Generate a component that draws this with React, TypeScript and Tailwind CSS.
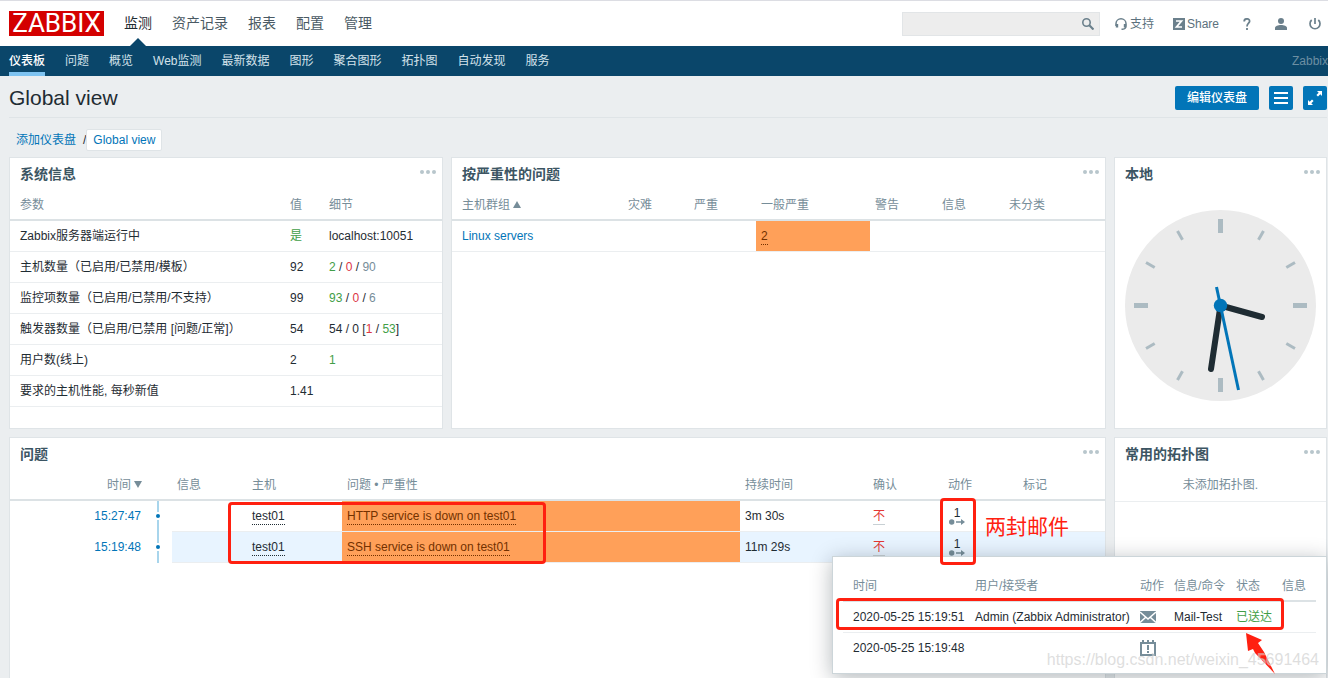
import type { ReactNode } from 'react';

const mainMenu = ['监测', '资产记录', '报表', '配置', '管理'];
const subMenu = ['仪表板', '问题', '概览', 'Web监测', '最新数据', '图形', '聚合图形', '拓扑图', '自动发现', '服务'];

const th = 'h-[31px] border-b-2 border-[#dce2e5] px-[5px] text-left font-normal text-[#768d99] first:pl-[10px]';
const td = 'h-[31px] border-b border-[#ebeef0] px-[5px] first:pl-[10px]';

function Green({ children }: { children: ReactNode }) {
  return <span className="text-[#429e47]">{children}</span>;
}

function Red({ children }: { children: ReactNode }) {
  return <span className="text-[#dc3545]">{children}</span>;
}

function Grey({ children }: { children: ReactNode }) {
  return <span className="text-[#768d99]">{children}</span>;
}

function Widget({ title, className = '', children }: { title: string; className?: string; children: ReactNode }) {
  return (
    <section className={`flex min-w-0 flex-col border border-[#dfe4e7] bg-white ${className}`}>
      <header className="flex h-8 shrink-0 justify-between pr-[5px] pl-[10px]">
        <h4 className="text-sm leading-8 font-bold text-[#3c5563]">{title}</h4>
        <button type="button" aria-label="更多" className="h-7 w-[18px]">
          <svg width="18" height="28" viewBox="0 0 18 28" fill="#b8c6cc">
            <circle cx="3" cy="14" r="2" />
            <circle cx="9" cy="14" r="2" />
            <circle cx="15" cy="14" r="2" />
          </svg>
        </button>
      </header>
      {children}
    </section>
  );
}

function SystemInfo() {
  const rows: [string, ReactNode, ReactNode][] = [
    ['Zabbix服务器端运行中', <Green>是</Green>, 'localhost:10051'],
    ['主机数量（已启用/已禁用/模板）', '92', <><Green>2</Green> / <Red>0</Red> / <Grey>90</Grey></>],
    ['监控项数量（已启用/已禁用/不支持）', '99', <><Green>93</Green> / <Red>0</Red> / <Grey>6</Grey></>],
    ['触发器数量（已启用/已禁用 [问题/正常]）', '54', <>54 / 0 [<Red>1</Red> / <Green>53</Green>]</>],
    ['用户数(线上)', '2', <Green>1</Green>],
    ['要求的主机性能, 每秒新值', '1.41', ''],
  ];
  return (
    <table className="w-full table-fixed border-separate border-spacing-0">
      <colgroup>
        <col className="w-[275px]" />
        <col className="w-[39px]" />
        <col />
      </colgroup>
      <thead>
        <tr>
          <th className={th}>参数</th>
          <th className={th}>值</th>
          <th className={th}>细节</th>
        </tr>
      </thead>
      <tbody>
        {rows.map(([name, value, details]) => (
          <tr key={name}>
            <td className={td}>{name}</td>
            <td className={td}>{value}</td>
            <td className={td}>{details}</td>
          </tr>
        ))}
      </tbody>
    </table>
  );
}

function SeverityTable() {
  return (
    <table className="w-full table-fixed border-separate border-spacing-0">
      <colgroup>
        <col className="w-[171px]" />
        <col className="w-[66px]" />
        <col className="w-[67px]" />
        <col className="w-[114px]" />
        <col className="w-[67px]" />
        <col className="w-[67px]" />
        <col />
      </colgroup>
      <thead>
        <tr>
          <th className={th}>
            <span className="flex items-center gap-[3px]">
              主机群组
              <svg width="8" height="7" viewBox="0 0 8 7" fill="#768d99"><path d="M4 0l4 7H0z" /></svg>
            </span>
          </th>
          {['灾难', '严重', '一般严重', '警告', '信息', '未分类'].map((s) => (
            <th key={s} className={th}>{s}</th>
          ))}
        </tr>
      </thead>
      <tbody>
        <tr>
          <td className={td}><a href="#linux" className="text-[#0275b8]">Linux servers</a></td>
          <td className={td} />
          <td className={td} />
          <td className={`${td} bg-[#ffa059] bg-clip-padding text-[#733100]`}>
            <button type="button" className="border-b border-dotted border-[#733100] leading-4">2</button>
          </td>
          <td className={td} />
          <td className={td} />
          <td className={td} />
        </tr>
      </tbody>
    </table>
  );
}

function Clock() {
  return (
    <div className="px-[10px] pt-5">
      <svg viewBox="0 0 191 191" className="block w-full">
        <circle cx="95.5" cy="95.5" r="95.5" fill="#ebebeb" />
        <g fill="#acbbc2">
          {[0, 30, 60, 90, 120, 150, 180, 210, 240, 270, 300, 330].map((a) =>
            a % 90 === 0 ? (
              <rect key={a} x="93" y="9" width="5" height="14" transform={`rotate(${a} 95.5 95.5)`} />
            ) : (
              <rect key={a} x="94" y="9.500" width="3" height="10" transform={`rotate(${a} 95.5 95.5)`} />
            ),
          )}
        </g>
        <g stroke="#1f2c33" strokeWidth="6" strokeLinecap="round">
          <path d="M95.5 95.5L137 107" />
          <path d="M95.5 95.5L86 159" />
        </g>
        <path d="M91.5 77L113.5 180" stroke="#0275b8" strokeWidth="3" />
        <circle cx="95.5" cy="95.5" r="6.7" fill="#0275b8" />
      </svg>
    </div>
  );
}

function ActionCount() {
  return (
    <button type="button" aria-label="动作 1" className="flex w-[18px] flex-col items-center">
      <span className="text-xs leading-3 text-[#1f2c33]">1</span>
      <svg width="16" height="6" viewBox="0 0 16 6">
        <circle cx="2.700" cy="3" r="2.700" fill="#768d99" />
        <path d="M7 2.200h5V0l4 3-4 3V3.800H7z" fill="#768d99" />
      </svg>
    </button>
  );
}

function ProblemsTable() {
  const rows = [
    { time: '15:27:47', name: 'HTTP service is down on test01', duration: '3m 30s', tint: '' },
    { time: '15:19:48', name: 'SSH service is down on test01', duration: '11m 29s', tint: 'bg-[#e8f4ff]' },
  ];
  return (
    <table className="w-full table-fixed border-separate border-spacing-0">
      <colgroup>
        <col className="w-[137px]" />
        <col className="w-[25px]" />
        <col className="w-[75px]" />
        <col className="w-[95px]" />
        <col />
        <col className="w-[128px]" />
        <col className="w-[75px]" />
        <col className="w-[75px]" />
        <col className="w-[87px]" />
      </colgroup>
      <thead>
        <tr>
          <th className={th}>
            <span className="flex items-center justify-end gap-[3px]">
              时间
              <svg width="8" height="7" viewBox="0 0 8 7" fill="#768d99"><path d="M4 7l4-7H0z" /></svg>
            </span>
          </th>
          <th className={th} />
          {['信息', '主机', '问题 • 严重性', '持续时间', '确认', '动作', '标记'].map((s) => (
            <th key={s} className={th}>{s}</th>
          ))}
        </tr>
      </thead>
      <tbody>
        {rows.map((r) => (
          <tr key={r.time}>
            <td className="h-[31px] border-b border-transparent pr-1.5 text-right">
              <a href="#event" className="text-[#0275b8]">{r.time}</a>
            </td>
            <td className="h-[31px] p-0 pl-[9px]">
              <div className="flex h-[31px] w-1 flex-col items-center gap-0.5">
                <span className="h-[11px] w-0.5 bg-[#a8d5ec]" />
                <span className="size-1 rounded-full bg-[#0275b8]" />
                <span className="w-0.5 flex-1 bg-[#a8d5ec]" />
              </div>
            </td>
            <td className={`${td} ${r.tint}`} />
            <td className={`${td} ${r.tint}`}>
              <button type="button" className="border-b border-dotted border-[#1f2c33] leading-4">test01</button>
            </td>
            <td className={`${td} bg-[#ffa059] bg-clip-padding text-[#733100]`}>
              <button type="button" className="border-b border-dotted border-[#733100] leading-4">{r.name}</button>
            </td>
            <td className={`${td} ${r.tint}`}>{r.duration}</td>
            <td className={`${td} ${r.tint}`}>
              <a href="#ack" className="inline-block border-b border-[#c8d0d4] leading-4 text-[#e33734]">不</a>
            </td>
            <td className={`${td} ${r.tint}`}><ActionCount /></td>
            <td className={`${td} ${r.tint}`} />
          </tr>
        ))}
      </tbody>
    </table>
  );
}

function ActionsPopup() {
  return (
    <div className="absolute top-[119px] right-0 border border-[#ccd5d9] bg-white px-[10px] pt-[14px] pb-[9px] shadow-[0_4px_20px_rgba(0,20,30,0.3)]">
      <table className="w-[473px] table-fixed border-separate border-spacing-0 whitespace-nowrap">
        <colgroup>
          <col className="w-[127px]" />
          <col className="w-[165px]" />
          <col className="w-[34px]" />
          <col className="w-[62px]" />
          <col className="w-[46px]" />
          <col className="w-[39px]" />
        </colgroup>
        <thead>
          <tr>
            {['时间', '用户/接受者', '动作', '信息/命令', '状态', '信息'].map((s, i) => (
              <th key={i} className={th}>{s}</th>
            ))}
          </tr>
        </thead>
        <tbody>
          <tr>
            <td className={td}>2020-05-25 15:19:51</td>
            <td className={td}>Admin (Zabbix Administrator)</td>
            <td className={td}>
              <svg width="16" height="12" viewBox="0 0 16 12">
                <path d="M0 0h16v12H0z" fill="#768d99" />
                <path d="M0 1l8 7L16 1M0 11.500l5.500-5M16 11.500l-5.500-5" fill="none" stroke="#fff" strokeWidth="1.500" />
              </svg>
            </td>
            <td className={td}>Mail-Test</td>
            <td className={td}><Green>已送达</Green></td>
            <td className={td} />
          </tr>
          <tr>
            <td className="h-[31px] border-b border-transparent pl-[10px]">2020-05-25 15:19:48</td>
            <td />
            <td className="border-b border-transparent px-[5px]">
              <svg width="16" height="16" viewBox="0 0 16 16" fill="none" stroke="#768d99" strokeWidth="2">
                <path d="M1 3h14v12H1zM3 0v3M8 0v3M13 0v3M8 5v5M8 11v2" />
              </svg>
            </td>
            <td />
            <td />
            <td />
          </tr>
        </tbody>
      </table>
    </div>
  );
}

export default function App() {
  return (
    <div className="flex min-h-screen flex-col overflow-hidden bg-[#ebeef0] font-['Liberation_Sans','Noto_Sans_CJK_SC',sans-serif] text-xs text-[#1f2c33]">
      <header className="flex h-[46px] items-center justify-between border-t border-[#dcdde3] bg-white pr-[7px] pl-[9px]">
        <div className="flex items-center gap-5">
          <a href="#home" className="flex h-[25px] w-[95px] items-center justify-center bg-[#d40000] font-[Roboto,sans-serif] text-[26px] leading-[25px] text-white">
            ZABBIX
          </a>
          <nav className="flex gap-5 text-sm">
            {mainMenu.map((item, i) => (
              <a key={item} href="#menu" className={i === 0 ? 'relative leading-[45px] text-[#1f2c33]' : 'leading-[45px] text-[#4a5a64]'}>
                {item}
                {i === 0 && (
                  <svg width="16" height="8" viewBox="0 0 16 8" className="absolute bottom-0 left-1.5">
                    <path d="M0 8l8-8 8 8z" fill="#0a466a" />
                  </svg>
                )}
              </a>
            ))}
          </nav>
        </div>
        <div className="flex items-center text-[#5c717d]">
          <form className="relative mr-[15px]">
            <input aria-label="搜索" className="block h-6 w-[198px] border border-[#e2e5e7] bg-[#ededed] pr-7 pl-2 outline-none" />
            <button type="button" aria-label="搜索" className="absolute top-1.5 right-1.5">
              <svg width="12" height="12" viewBox="0 0 12 12" fill="none" stroke="#6b808c">
                <circle cx="4.500" cy="4.500" r="3.700" strokeWidth="1.600" />
                <path d="M7.300 7.300L11.500 11.500" strokeWidth="2.200" />
              </svg>
            </button>
          </form>
          <a href="#support" className="mr-[19px] flex items-center gap-[3px]">
            <svg width="12" height="12" viewBox="0 0 12 12" fill="none" stroke="#6b808c">
              <path d="M1 8V5.500a5 4.700 0 0 1 10 0V8c0 2.500-1.500 3.300-4.500 3.300" strokeWidth="1.500" />
              <path d="M2 6v3.500M10 6v3.500" strokeWidth="2.400" />
            </svg>
            支持
          </a>
          <a href="#share" className="mr-6 flex items-center gap-0.5">
            <svg width="12" height="12" viewBox="0 0 12 12">
              <path d="M0 0h12v12H0z" fill="#6b808c" />
              <path d="M3 3h5.500L3.500 9H9" fill="none" stroke="#fff" strokeWidth="1.700" />
            </svg>
            Share
          </a>
          <a href="#help" aria-label="帮助" className="mr-6">
            <svg width="8" height="12" viewBox="0 0 8 12" fill="none" stroke="#6b808c" strokeWidth="1.800">
              <path d="M1.200 3.500C1.200 0 6.600 0 6.600 3.200C6.600 5.200 4 5.200 4 8.500M4 10v2" />
            </svg>
          </a>
          <a href="#profile" aria-label="用户" className="mr-[22px]">
            <svg width="12" height="12" viewBox="0 0 12 12" fill="#6b808c">
              <circle cx="6" cy="3" r="3" />
              <path d="M0 12v-2C0 8 3 7 6 7s6 1 6 3v2z" />
            </svg>
          </a>
          <button type="button" aria-label="登出">
            <svg width="12" height="12" viewBox="0 0 12 12" fill="none" stroke="#6b808c" strokeWidth="1.700">
              <path d="M2.700 2A5 5 0 1 0 9.300 2M6 0v6" />
            </svg>
          </button>
        </div>
      </header>

      <nav className="flex h-[30px] items-start justify-between bg-[#0a466a] pl-[9px]">
        <div className="flex gap-5">
          {subMenu.map((item, i) => (
            <a key={item} href="#section" className={i === 0 ? 'h-[30px] border-b-4 border-[#7ec3f1] leading-[30px] font-medium text-white' : 'leading-[30px] text-[#d3e2ea]'}>
              {item}
            </a>
          ))}
        </div>
        <span className="leading-[30px] text-[#6d8fa3]">Zabbix</span>
      </nav>

      <main className="flex flex-1 flex-col pr-px pl-[9px]">
        <div className="flex h-[42px] items-center justify-between border-b border-[#dfe4e7] pt-[3px]">
          <h1 className="text-[21px] leading-6">Global view</h1>
          <div className="flex gap-[10px]">
            <button type="button" className="h-6 rounded-xs bg-[#0275b8] px-3 font-medium text-white">编辑仪表盘</button>
            <button type="button" aria-label="菜单" className="flex size-6 items-center justify-center rounded-xs bg-[#0275b8]">
              <svg width="14" height="12" viewBox="0 0 14 12" stroke="#fff" strokeWidth="2"><path d="M0 1h14M0 6h14M0 11h14" /></svg>
            </button>
            <button type="button" aria-label="全屏" className="flex size-6 items-center justify-center rounded-xs bg-[#0275b8]">
              <svg width="14" height="14" viewBox="0 0 14 14" fill="#fff">
                <path d="M9 0h5v5l-1.700-1.700L10 5.600 8.400 4l2.300-2.300zM5 14H0V9l1.700 1.700L4 8.400 5.600 10l-2.300 2.300z" />
              </svg>
            </button>
          </div>
        </div>

        <div className="flex items-center gap-[7px] pt-[11px] pb-1.5 pl-[7px]">
          <a href="#dashboards" className="text-[#0275b8]">添加仪表盘</a>
          <div className="flex items-center">
            <span>/</span>
            <a href="#global" className="h-[22px] rounded-xs border border-[#dfe4e7] bg-white px-1.5 leading-5 text-[#0275b8]">Global view</a>
          </div>
        </div>

        <div className="mb-2 grid grid-cols-[434fr_655fr_213fr] gap-2">
          <Widget title="系统信息" className="min-h-[272px]"><SystemInfo /></Widget>
          <Widget title="按严重性的问题"><SeverityTable /></Widget>
          <Widget title="本地"><Clock /></Widget>
        </div>

        <div className="relative grid flex-1 grid-cols-[434fr_655fr_213fr] gap-2">
          <Widget title="问题" className="col-span-2 border-b-0"><ProblemsTable /></Widget>
          <Widget title="常用的拓扑图" className="border-b-0">
            <p className="border-b border-[#ebeef0] text-center leading-[31px] text-[#768d99]">未添加拓扑图.</p>
          </Widget>

          <ActionsPopup />

          {/* Hand-drawn marks */}
          <div className="pointer-events-none absolute top-[65px] left-[219px] h-[62px] w-[318px] rounded-sm border-3 border-[#ff2010]" />
          <div className="pointer-events-none absolute top-[61px] right-[351px] h-[67px] w-9 rounded-sm border-3 border-[#ff2010]" />
          <div className="pointer-events-none absolute top-[161px] right-[43px] h-8 w-[448px] rounded-sm border-3 border-[#ff2010]" />
          <p className="absolute top-[76px] right-[258px] text-[21px] leading-7 text-[#ff2010]">两封邮件</p>
          <svg width="32" height="42" viewBox="0 0 32 42" className="absolute top-[195px] right-[50px]">
            <path d="M1 1L17 8L13 11L19 20L30 42L10 21L8 17L3 19z" fill="#ff2010" />
          </svg>
          <p className="absolute top-[211px] right-2 text-base leading-6 text-[#c8c8c8]/60 text-shadow-[1px_1px_1px_rgba(255,255,255,0.5)]">
            https://blog.csdn.net/weixin_45691464
          </p>
        </div>
      </main>
    </div>
  );
}
